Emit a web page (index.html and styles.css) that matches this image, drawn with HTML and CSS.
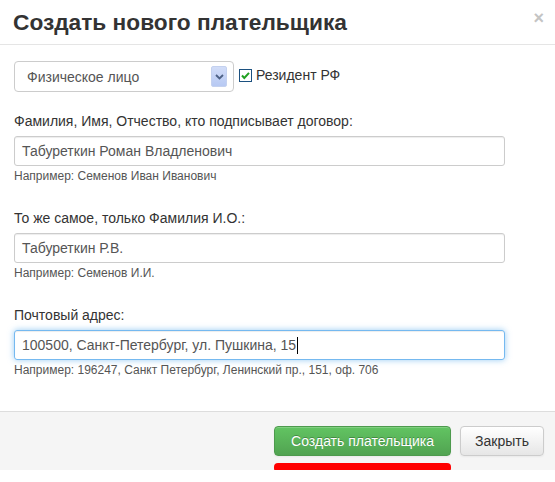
FILE: index.html
```html
<!DOCTYPE html>
<html lang="ru">
<head>
    <meta charset="UTF-8">
    <title>Создать нового плательщика</title>
    <link rel="stylesheet" href="styles.css">
</head>
<body>

<div class="modal">
    <div class="modal-header">
        <h3>Создать нового плательщика</h3>
        <span class="close">×</span>
    </div>

    <div class="modal-body">
        <div class="row-type">
            <div class="select">
                <span>Физическое лицо</span>
                <span class="select-btn">
                    <svg width="9" height="6" viewBox="0 0 9 6"><path d="M1 1 L4.5 4.5 L8 1" fill="none" stroke="#4d6185" stroke-width="1.8"/></svg>
                </span>
            </div>
            <label class="check">
                <svg width="13" height="13" viewBox="0 0 13 13">
                    <rect x="0.5" y="0.5" width="12" height="12" fill="#fff" stroke="#1c5180"/>
                    <path d="M3 6.5 L5.3 9 L10 3.8" fill="none" stroke="#21a121" stroke-width="2"/>
                </svg>
                Резидент РФ
            </label>
        </div>

        <div class="field">
            <label>Фамилия, Имя, Отчество, кто подписывает договор:</label>
            <div class="input">Табуреткин Роман Владленович</div>
            <p class="help">Например: Семенов Иван Иванович</p>
        </div>

        <div class="field">
            <label>То же самое, только Фамилия И.О.:</label>
            <div class="input">Табуреткин Р.В.</div>
            <p class="help">Например: Семенов И.И.</p>
        </div>

        <div class="field">
            <label>Почтовый адрес:</label>
            <div class="input focus">100500, Санкт-Петербург, ул. Пушкина, 15<span class="caret"></span></div>
            <p class="help">Например: 196247, Санкт Петербург, Ленинский пр., 151, оф. 706</p>
        </div>
    </div>

    <div class="modal-footer">
        <div class="btn-wrap">
            <button class="btn btn-success">Создать плательщика</button>
            <span class="mark"></span>
        </div>
        <button class="btn">Закрыть</button>
    </div>
</div>

</body>
</html>
```

FILE: styles.css
```css
body {
    margin: 0;
    background: #fff;
    font-family: "Liberation Sans", Arial, sans-serif;
    font-size: 14px;
    color: #333;
}
.modal {
    width: 555px;
}
.modal-header {
    display: flex;
    justify-content: space-between;
    align-items: center;
    height: 44px;
    padding: 0 11px 0 13px;
    border-bottom: 1px solid #e5e5e5;
}
.modal-header h3 {
    margin: 0;
    font-size: 22.7px;
    font-weight: bold;
    color: #333;
}
.close {
    font-size: 18px;
    font-weight: bold;
    color: #c4c4c4;
    line-height: 1;
    margin-top: -8px;
}
.modal-body {
    padding: 16px 14px 0;
    height: 350px;
}
.row-type {
    display: flex;
    align-items: center;
    gap: 5px;
    margin-bottom: 19px;
}
.select {
    box-sizing: border-box;
    width: 220px;
    height: 31px;
    border: 1px solid #ccc;
    border-radius: 4px;
    display: flex;
    align-items: center;
    justify-content: space-between;
    padding: 0 6px 0 12px;
    color: #555;
    font-size: 14px;
}
.select-btn {
    box-sizing: border-box;
    width: 16px;
    height: 21px;
    background: linear-gradient(#d2ddf8, #b7c9f3);
    border: 1px solid #c4d1ef;
    border-radius: 2px;
    display: flex;
    align-items: center;
    justify-content: center;
}
.check {
    display: flex;
    align-items: center;
    gap: 4px;
    font-size: 14px;
    color: #333;
    margin-top: -3px;
}
.field {
    margin-bottom: 24px;
}
.field label {
    display: block;
    line-height: 20px;
    margin-bottom: 5px;
}
.input {
    box-sizing: border-box;
    width: 491px;
    height: 30px;
    border: 1px solid #ccc;
    border-radius: 3px;
    padding: 0 7px;
    display: flex;
    align-items: center;
    color: #555;
    box-shadow: inset 0 1px 1px rgba(0, 0, 0, 0.075);
}
.input.focus {
    border-color: rgba(82, 168, 236, 0.8);
    box-shadow: inset 0 1px 1px rgba(0, 0, 0, 0.075), 0 0 6px rgba(82, 168, 236, 0.6);
}
.caret {
    display: inline-block;
    width: 1px;
    height: 17px;
    background: #000;
    margin-left: 1px;
}
.help {
    margin: 2px 0 0;
    font-size: 12px;
    line-height: 16px;
    color: #555;
}
.modal-footer {
    display: flex;
    justify-content: flex-end;
    align-items: flex-start;
    gap: 9px;
    height: 59px;
    padding: 14px 11px 0 0;
    background: #f5f5f5;
    border-top: 1px solid #ddd;
    box-sizing: border-box;
}
.btn-wrap {
    position: relative;
}
.btn {
    height: 30px;
    padding: 0 14px;
    font-family: "Liberation Sans", Arial, sans-serif;
    font-size: 14px;
    color: #333;
    background: linear-gradient(#fff, #e6e6e6);
    border: 1px solid #ccc;
    border-radius: 4px;
    box-shadow: inset 0 1px 0 rgba(255, 255, 255, 0.2), 0 1px 2px rgba(0, 0, 0, 0.05);
}
.btn-success {
    width: 177px;
    color: #fff;
    text-shadow: 0 -1px 0 rgba(0, 0, 0, 0.25);
    background: linear-gradient(#62c462, #51a351);
    border-color: #4d9a4d;
}
.mark {
    position: absolute;
    left: 0;
    top: 37px;
    width: 177px;
    height: 9px;
    background: #f00;
    border-radius: 4px;
}
```
